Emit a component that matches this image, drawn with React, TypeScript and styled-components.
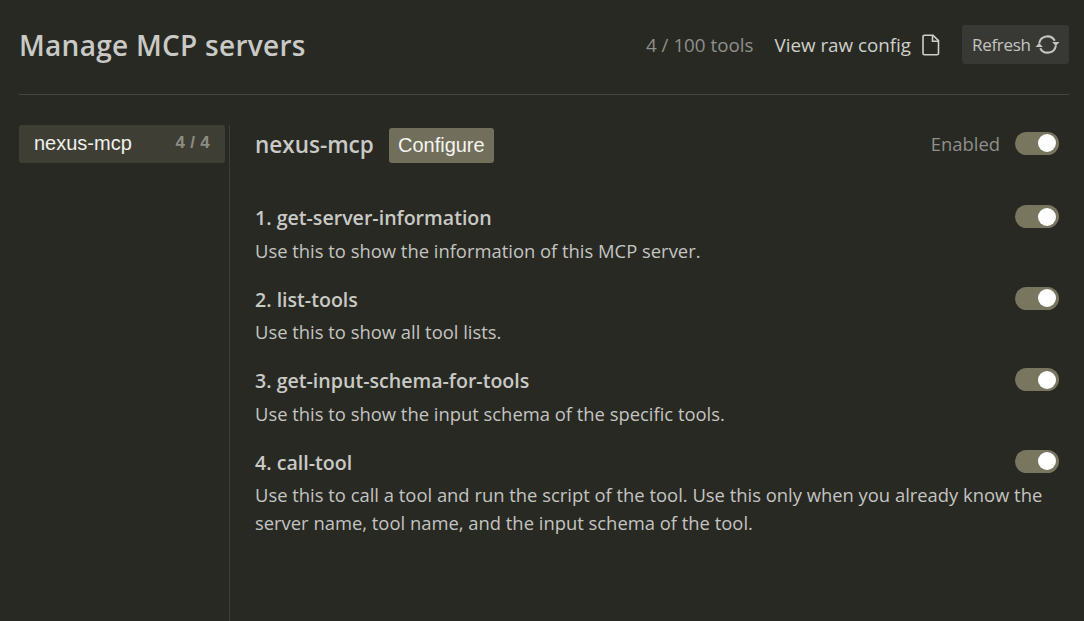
import React from "react";
import styled, { createGlobalStyle } from "styled-components";

const GlobalStyle = createGlobalStyle`
  html, body {
    margin: 0;
    height: 100%;
    background: #282923;
    overflow: hidden;
  }
  #root { height: 100%; }
`;

const uiFont = `"Open Sans", "Noto Sans", sans-serif`;

const tools = [
  { name: "1. get-server-information", desc: "Use this to show the information of this MCP server." },
  { name: "2. list-tools", desc: "Use this to show all tool lists." },
  { name: "3. get-input-schema-for-tools", desc: "Use this to show the input schema of the specific tools." },
  {
    name: "4. call-tool",
    desc: "Use this to call a tool and run the script of the tool. Use this only when you already know the server name, tool name, and the input schema of the tool.",
  },
];

const Page = styled.div`
  height: 621px;
  box-sizing: border-box;
  padding: 25px 15px 0 19px;
  display: flex;
  flex-direction: column;
  font-family: ${uiFont};
  color: #cccccc;
`;

const Header = styled.header`
  height: 69px;
  flex: none;
  display: flex;
  align-items: flex-start;
  border-bottom: 1px solid #45463f;
`;

const Title = styled.h1`
  margin: 1px 0 0 0;
  font-size: 28px;
  line-height: 39px;
  font-weight: 600;
  letter-spacing: 0.28px;
  color: #c9c9c6;
`;

const HeaderActions = styled.div`
  margin-left: auto;
  display: flex;
  align-items: center;
  height: 39px;
`;

const ToolCount = styled.span`
  font-size: 18.8px;
  color: #8f8f8b;
  margin-right: 21px;
`;

const RawLink = styled.span`
  display: flex;
  align-items: center;
  gap: 11px;
  font-size: 18.8px;
  color: #cfcfcc;
  margin-right: 22px;
`;

const RefreshButton = styled.button`
  display: flex;
  align-items: center;
  gap: 4px;
  width: 107px;
  height: 39px;
  box-sizing: border-box;
  padding: 0 0 0 10px;
  border: 0;
  border-radius: 3px;
  background: #383935;
  color: #c4c4c1;
  font-family: ${uiFont};
  font-size: 17px;
  letter-spacing: -0.3px;
`;

const Body = styled.div`
  flex: 1;
  display: flex;
  padding-top: 30px;
  min-height: 0;
`;

const Sidebar = styled.aside`
  width: 211px;
  box-sizing: border-box;
  flex: none;
  border-right: 1px solid #3d3e38;
`;

const ServerItem = styled.div`
  width: 206px;
  height: 38px;
  box-sizing: border-box;
  padding: 0 15px 2px;
  display: flex;
  align-items: center;
  justify-content: space-between;
  border-radius: 3px;
  background: #3f3e34;
  font-family: "Liberation Sans", Arial, sans-serif;
  font-size: 20px;
  color: #f0f0ec;
`;

const ServerCount = styled.span`
  font-size: 17px;
  font-weight: 700;
  letter-spacing: 0.3px;
  color: #8e8d83;
`;

const Content = styled.main`
  flex: 1;
  padding: 3px 10px 0 25px;
`;

const ServerHeader = styled.div`
  height: 35px;
  display: flex;
  align-items: center;
  margin-bottom: 41px;
`;

const ServerName = styled.h2`
  margin: 0 15px 3px 0;
  font-size: 22.5px;
  font-weight: 600;
  color: #c9c9c6;
`;

const ConfigureButton = styled.button`
  width: 105px;
  height: 35px;
  border: 0;
  padding: 0;
  border-radius: 3px;
  background: #716e5b;
  color: #f4f4f0;
  font-family: "Liberation Sans", Arial, sans-serif;
  font-size: 20px;
`;

const EnabledGroup = styled.div`
  margin: 0 0 5px auto;
  display: flex;
  align-items: center;
  gap: 15px;
`;

const EnabledLabel = styled.span`
  font-size: 18.4px;
  color: #8f8f8b;
`;

const Track = styled.span`
  position: relative;
  display: block;
  flex: none;
  width: 44px;
  height: 23px;
  border-radius: 12px;
  background: #797660;
`;

const Knob = styled.span`
  position: absolute;
  top: 2.5px;
  right: 3px;
  width: 18px;
  height: 18px;
  border-radius: 50%;
  background: #ffffff;
`;

const ToolList = styled.div`
  display: flex;
  flex-direction: column;
  gap: 21.5px;
`;

const ToolRow = styled.div`
  display: flex;
  flex-direction: column;
`;

const ToolHead = styled.div`
  display: flex;
  align-items: center;
  justify-content: space-between;
  height: 27px;
  margin-bottom: 5.5px;

  ${Track} {
    margin-bottom: 2px;
  }
`;

const ToolName = styled.span`
  font-size: 19.6px;
  font-weight: 600;
  color: #c9c9c6;
`;

const ToolDesc = styled.p`
  margin: 0;
  font-size: 18.4px;
  line-height: 27.5px;
  color: #c4c4c1;
`;

const Toggle = () => (
  <Track>
    <Knob />
  </Track>
);

const FileIcon = () => (
  <svg width="18" height="22" viewBox="0 0 18 22" fill="none" stroke="currentColor" strokeWidth="1.6">
    <path d="M2.5 1.2h8.5l5.5 5.5v12.6a1.5 1.5 0 0 1-1.5 1.5H2.5A1.5 1.5 0 0 1 1 19.3V2.7a1.5 1.5 0 0 1 1.5-1.5z" />
    <path d="M10.5 1.2v6h6" />
  </svg>
);

const RefreshIcon = () => (
  <svg width="25" height="21" viewBox="0 0 24 20" fill="none" stroke="currentColor" strokeWidth="2">
    <path d="M4 9a8 8 0 0 1 15-2.5" />
    <path d="M20 11a8 8 0 0 1-15 2.5" />
    <path d="M0.5 8.5h7L4 12.5z" fill="currentColor" stroke="none" transform="rotate(180 4 10.5)" />
    <path d="M16.5 11.5h7L20 7.5z" fill="currentColor" stroke="none" transform="rotate(180 20 9.5)" />
  </svg>
);

export default function App() {
  return (
    <>
      <GlobalStyle />
      <Page>
        <Header>
          <Title>Manage MCP servers</Title>
          <HeaderActions>
            <ToolCount>4 / 100 tools</ToolCount>
            <RawLink>
              View raw config
              <FileIcon />
            </RawLink>
            <RefreshButton>
              Refresh
              <RefreshIcon />
            </RefreshButton>
          </HeaderActions>
        </Header>
        <Body>
          <Sidebar>
            <ServerItem>
              <span>nexus-mcp</span>
              <ServerCount>4 / 4</ServerCount>
            </ServerItem>
          </Sidebar>
          <Content>
            <ServerHeader>
              <ServerName>nexus-mcp</ServerName>
              <ConfigureButton>Configure</ConfigureButton>
              <EnabledGroup>
                <EnabledLabel>Enabled</EnabledLabel>
                <Toggle />
              </EnabledGroup>
            </ServerHeader>
            <ToolList>
              {tools.map((tool) => (
                <ToolRow key={tool.name}>
                  <ToolHead>
                    <ToolName>{tool.name}</ToolName>
                    <Toggle />
                  </ToolHead>
                  <ToolDesc>{tool.desc}</ToolDesc>
                </ToolRow>
              ))}
            </ToolList>
          </Content>
        </Body>
      </Page>
    </>
  );
}
